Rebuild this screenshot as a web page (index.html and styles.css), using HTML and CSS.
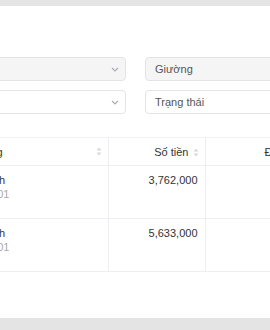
FILE: index.html
```html
<!DOCTYPE html>
<html lang="vi">
<head>
    <meta charset="UTF-8">
    <meta name="viewport" content="width=device-width, initial-scale=1.0">
    <title>Danh sách hợp đồng</title>
    <link rel="stylesheet" href="styles.css">
</head>
<body>
    <div class="panel">
        <div class="filters">
            <div class="field disabled">
                <span class="placeholder">Phòng</span>
                <svg class="chevron" width="8" height="5" viewBox="0 0 8 5"><path d="M1 1l3 3 3-3" fill="none" stroke="#a8abb2" stroke-width="1.1"/></svg>
            </div>
            <div class="field disabled">
                <span class="placeholder">Giường</span>
            </div>
            <div class="field">
                <span class="placeholder">Tòa nhà</span>
                <svg class="chevron" width="8" height="5" viewBox="0 0 8 5"><path d="M1 1l3 3 3-3" fill="none" stroke="#a8abb2" stroke-width="1.1"/></svg>
            </div>
            <div class="field">
                <span class="placeholder">Trạng thái</span>
            </div>
        </div>

        <table class="data-table">
            <colgroup>
                <col class="col-name">
                <col class="col-amount">
                <col class="col-status">
            </colgroup>
            <thead>
                <tr>
                    <th class="th-left">Khách hàng
                        <svg class="sort" width="6" height="9" viewBox="0 0 6 9"><path d="M3 0.5L5.5 3.5H0.5z M3 8.5L0.5 5.5H5.5z" fill="#d5d8de"/></svg>
                    </th>
                    <th class="th-right">Số tiền
                        <svg class="sort" width="6" height="9" viewBox="0 0 6 9"><path d="M3 0.5L5.5 3.5H0.5z M3 8.5L0.5 5.5H5.5z" fill="#d5d8de"/></svg>
                    </th>
                    <th class="th-center">Đã thanh toán</th>
                </tr>
            </thead>
            <tbody>
                <tr>
                    <td>
                        <div class="name">Lê Minh Anh</div>
                        <div class="sub">Phòng: PH01</div>
                    </td>
                    <td class="amount">3,762,000</td>
                    <td></td>
                </tr>
                <tr>
                    <td>
                        <div class="name">Lê Minh Anh</div>
                        <div class="sub">Phòng: PH01</div>
                    </td>
                    <td class="amount">5,633,000</td>
                    <td></td>
                </tr>
            </tbody>
        </table>
    </div>
</body>
</html>
```

FILE: styles.css
```css
body {
    margin: 0;
    padding: 6px 0 12px;
    background: #e4e4e4;
    font-family: "Liberation Sans", Arial, sans-serif;
    font-size: 11px;
    color: #333;
    overflow: hidden;
}
.panel {
    background: #fff;
    height: 312px;
    padding-top: 51px;
    box-sizing: border-box;
}
.filters {
    display: grid;
    grid-template-columns: 236px 236px;
    column-gap: 19px;
    row-gap: 9px;
    margin-left: -110px;
}
.field {
    height: 24px;
    box-sizing: border-box;
    border: 1px solid #e2e4e8;
    border-radius: 4px;
    background: #fff;
    display: flex;
    align-items: center;
    justify-content: space-between;
    padding: 0 6px 0 9px;
}
.field.disabled {
    background: #f5f5f6;
}
.placeholder {
    color: #555;
}
.chevron {
    margin-top: 1px;
}
.data-table {
    margin-top: 23px;
    margin-left: -66px;
    border-collapse: collapse;
    table-layout: fixed;
    width: 455px;
}
.col-name { width: 174px; }
.col-amount { width: 97px; }
.col-status { width: 184px; }
.data-table th {
    height: 28px;
    font-weight: normal;
    color: #333;
    border-top: 1px solid #f0f1f4;
    border-bottom: 1px solid #eceef2;
    border-right: 1px solid #eceef2;
    padding: 0 6px 0 10px;
    box-sizing: border-box;
}
.th-left {
    text-align: left;
    position: relative;
}
.th-left .sort {
    position: absolute;
    right: 6px;
    top: 9px;
}
.th-right { text-align: right; }
.th-center { text-align: center; }
.sort {
    vertical-align: -1px;
    margin-left: 1px;
}
.data-table td {
    height: 53px;
    vertical-align: top;
    padding: 8px 7px 0 10px;
    box-sizing: border-box;
    border-bottom: 1px solid #eceef2;
    border-right: 1px solid #eceef2;
}
.name {
    color: #333;
    line-height: 13px;
}
.sub {
    color: #aaa;
    line-height: 13px;
    margin-top: 1px;
}
.amount {
    text-align: right;
    line-height: 13px;
}
```
